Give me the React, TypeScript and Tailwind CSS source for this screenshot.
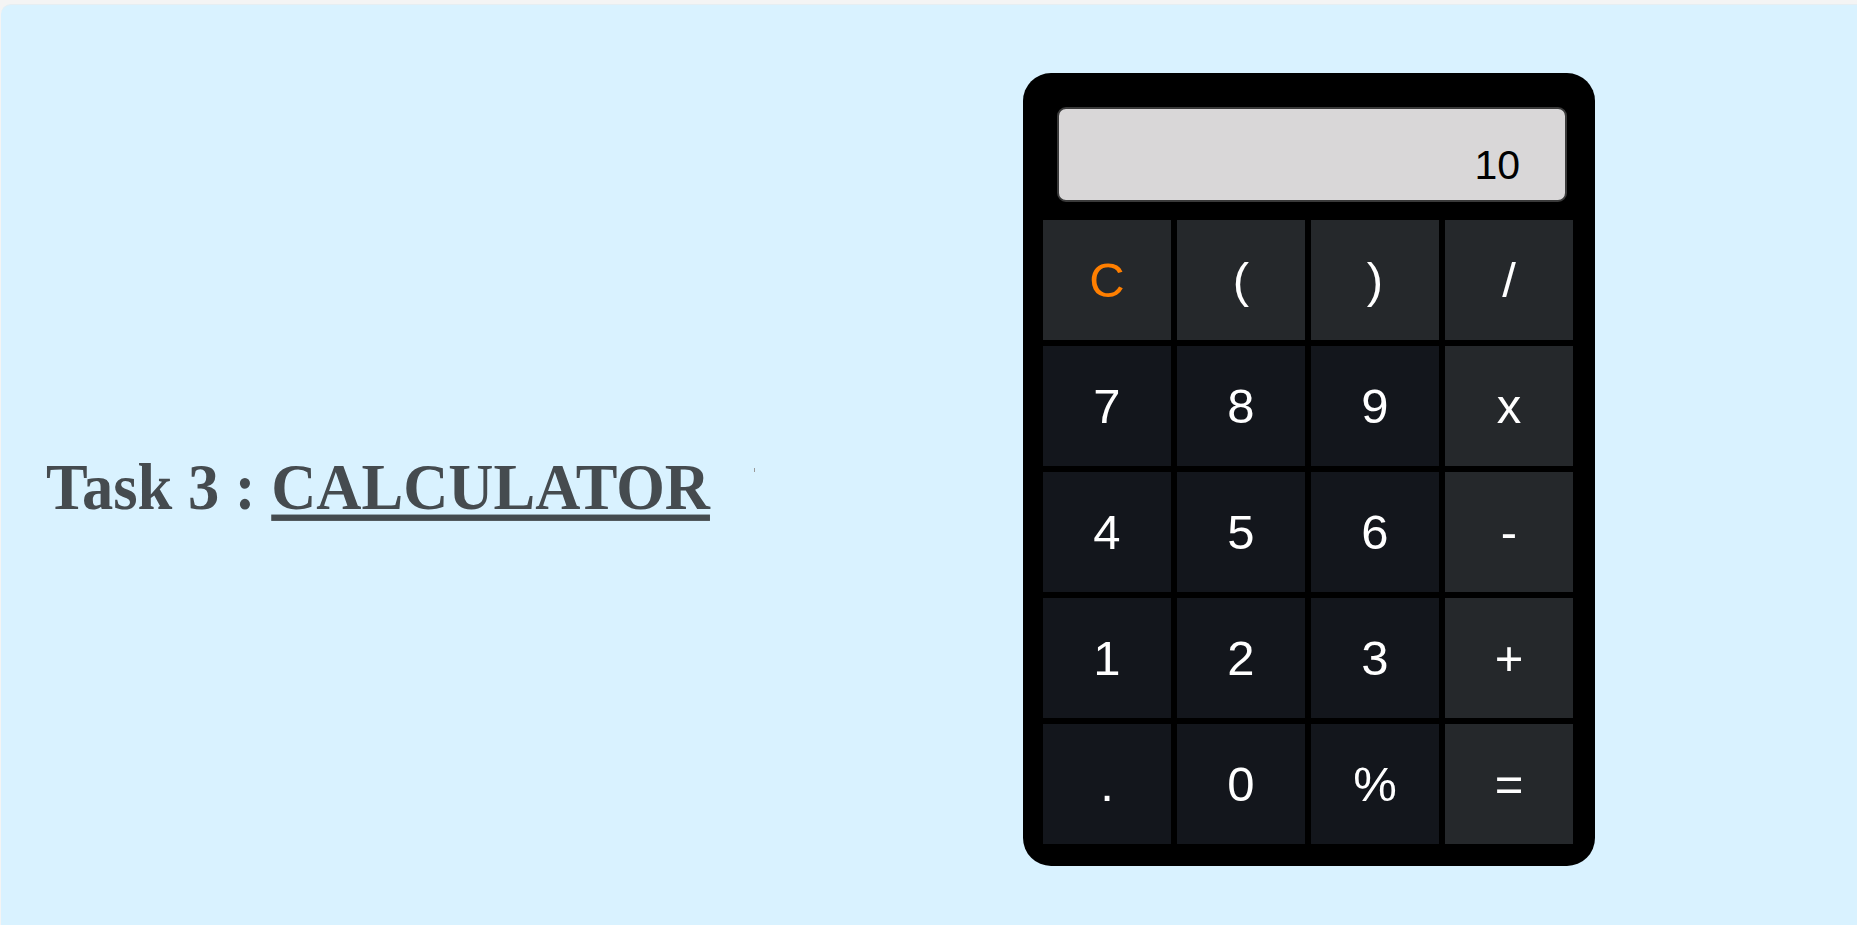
import React from 'react';

type Key = { label: string; kind: 'fn' | 'num' | 'clear' };

const keys: Key[] = [
  { label: 'C', kind: 'clear' },
  { label: '(', kind: 'fn' },
  { label: ')', kind: 'fn' },
  { label: '/', kind: 'fn' },
  { label: '7', kind: 'num' },
  { label: '8', kind: 'num' },
  { label: '9', kind: 'num' },
  { label: 'x', kind: 'fn' },
  { label: '4', kind: 'num' },
  { label: '5', kind: 'num' },
  { label: '6', kind: 'num' },
  { label: '-', kind: 'fn' },
  { label: '1', kind: 'num' },
  { label: '2', kind: 'num' },
  { label: '3', kind: 'num' },
  { label: '+', kind: 'fn' },
  { label: '.', kind: 'num' },
  { label: '0', kind: 'num' },
  { label: '%', kind: 'num' },
  { label: '=', kind: 'fn' },
];

const CalcKey = ({ label, kind }: Key) => {
  const bg = kind === 'num' ? 'bg-[#13161c]' : 'bg-[#25282b]';
  const color = kind === 'clear' ? 'text-[#ff7f00]' : 'text-white';
  return (
    <button
      className={`${bg} ${color} h-[120px] w-[128px] flex items-center justify-center text-[49px] leading-none font-['Liberation_Sans',Arial,sans-serif]`}
    >
      {label}
    </button>
  );
};

const Calculator = () => (
  <div className="w-[572px] bg-black rounded-[28px] pt-[34px] pb-[22px] pl-[20px] pr-[22px] flex flex-col">
    <div className="ml-[14px] mr-[6px] h-[95px] bg-[#d9d7d8] border-2 border-[#3a3a3a] rounded-[9px] flex items-end justify-end pr-[45px] pb-[14px]">
      <span className="text-[41px] leading-none text-black font-['Liberation_Sans',Arial,sans-serif]">10</span>
    </div>
    <div className="mt-[18px] grid grid-cols-[repeat(4,128px)] gap-[6px]">
      {keys.map((k) => (
        <CalcKey key={k.label} {...k} />
      ))}
    </div>
  </div>
);

export default function App() {
  return (
    <div className="w-full h-[925px] overflow-hidden bg-[#f4f4f4] pt-[4px] pl-[1px]">
      <div className="h-[940px] bg-[#d9f2ff] rounded-tl-[10px] border-t border-[#e6eef2] flex items-start">
        <div className="mt-[451px] ml-[45px] w-[977px] flex items-start">
          <h1 className="text-[62.5px] leading-none font-bold text-[#454b4f] font-['Liberation_Serif','Times_New_Roman',serif] whitespace-nowrap scale-y-[1.06]">
            Task 3 :{' '}
            <span className="underline decoration-[6px] underline-offset-[5px]">CALCULATOR</span>
          </h1>
          <span className="ml-[44px] mt-[12px] w-px h-[4px] bg-[#9a9a9a]" />
        </div>
        <div className="mt-[68px]">
          <Calculator />
        </div>
      </div>
    </div>
  );
}
